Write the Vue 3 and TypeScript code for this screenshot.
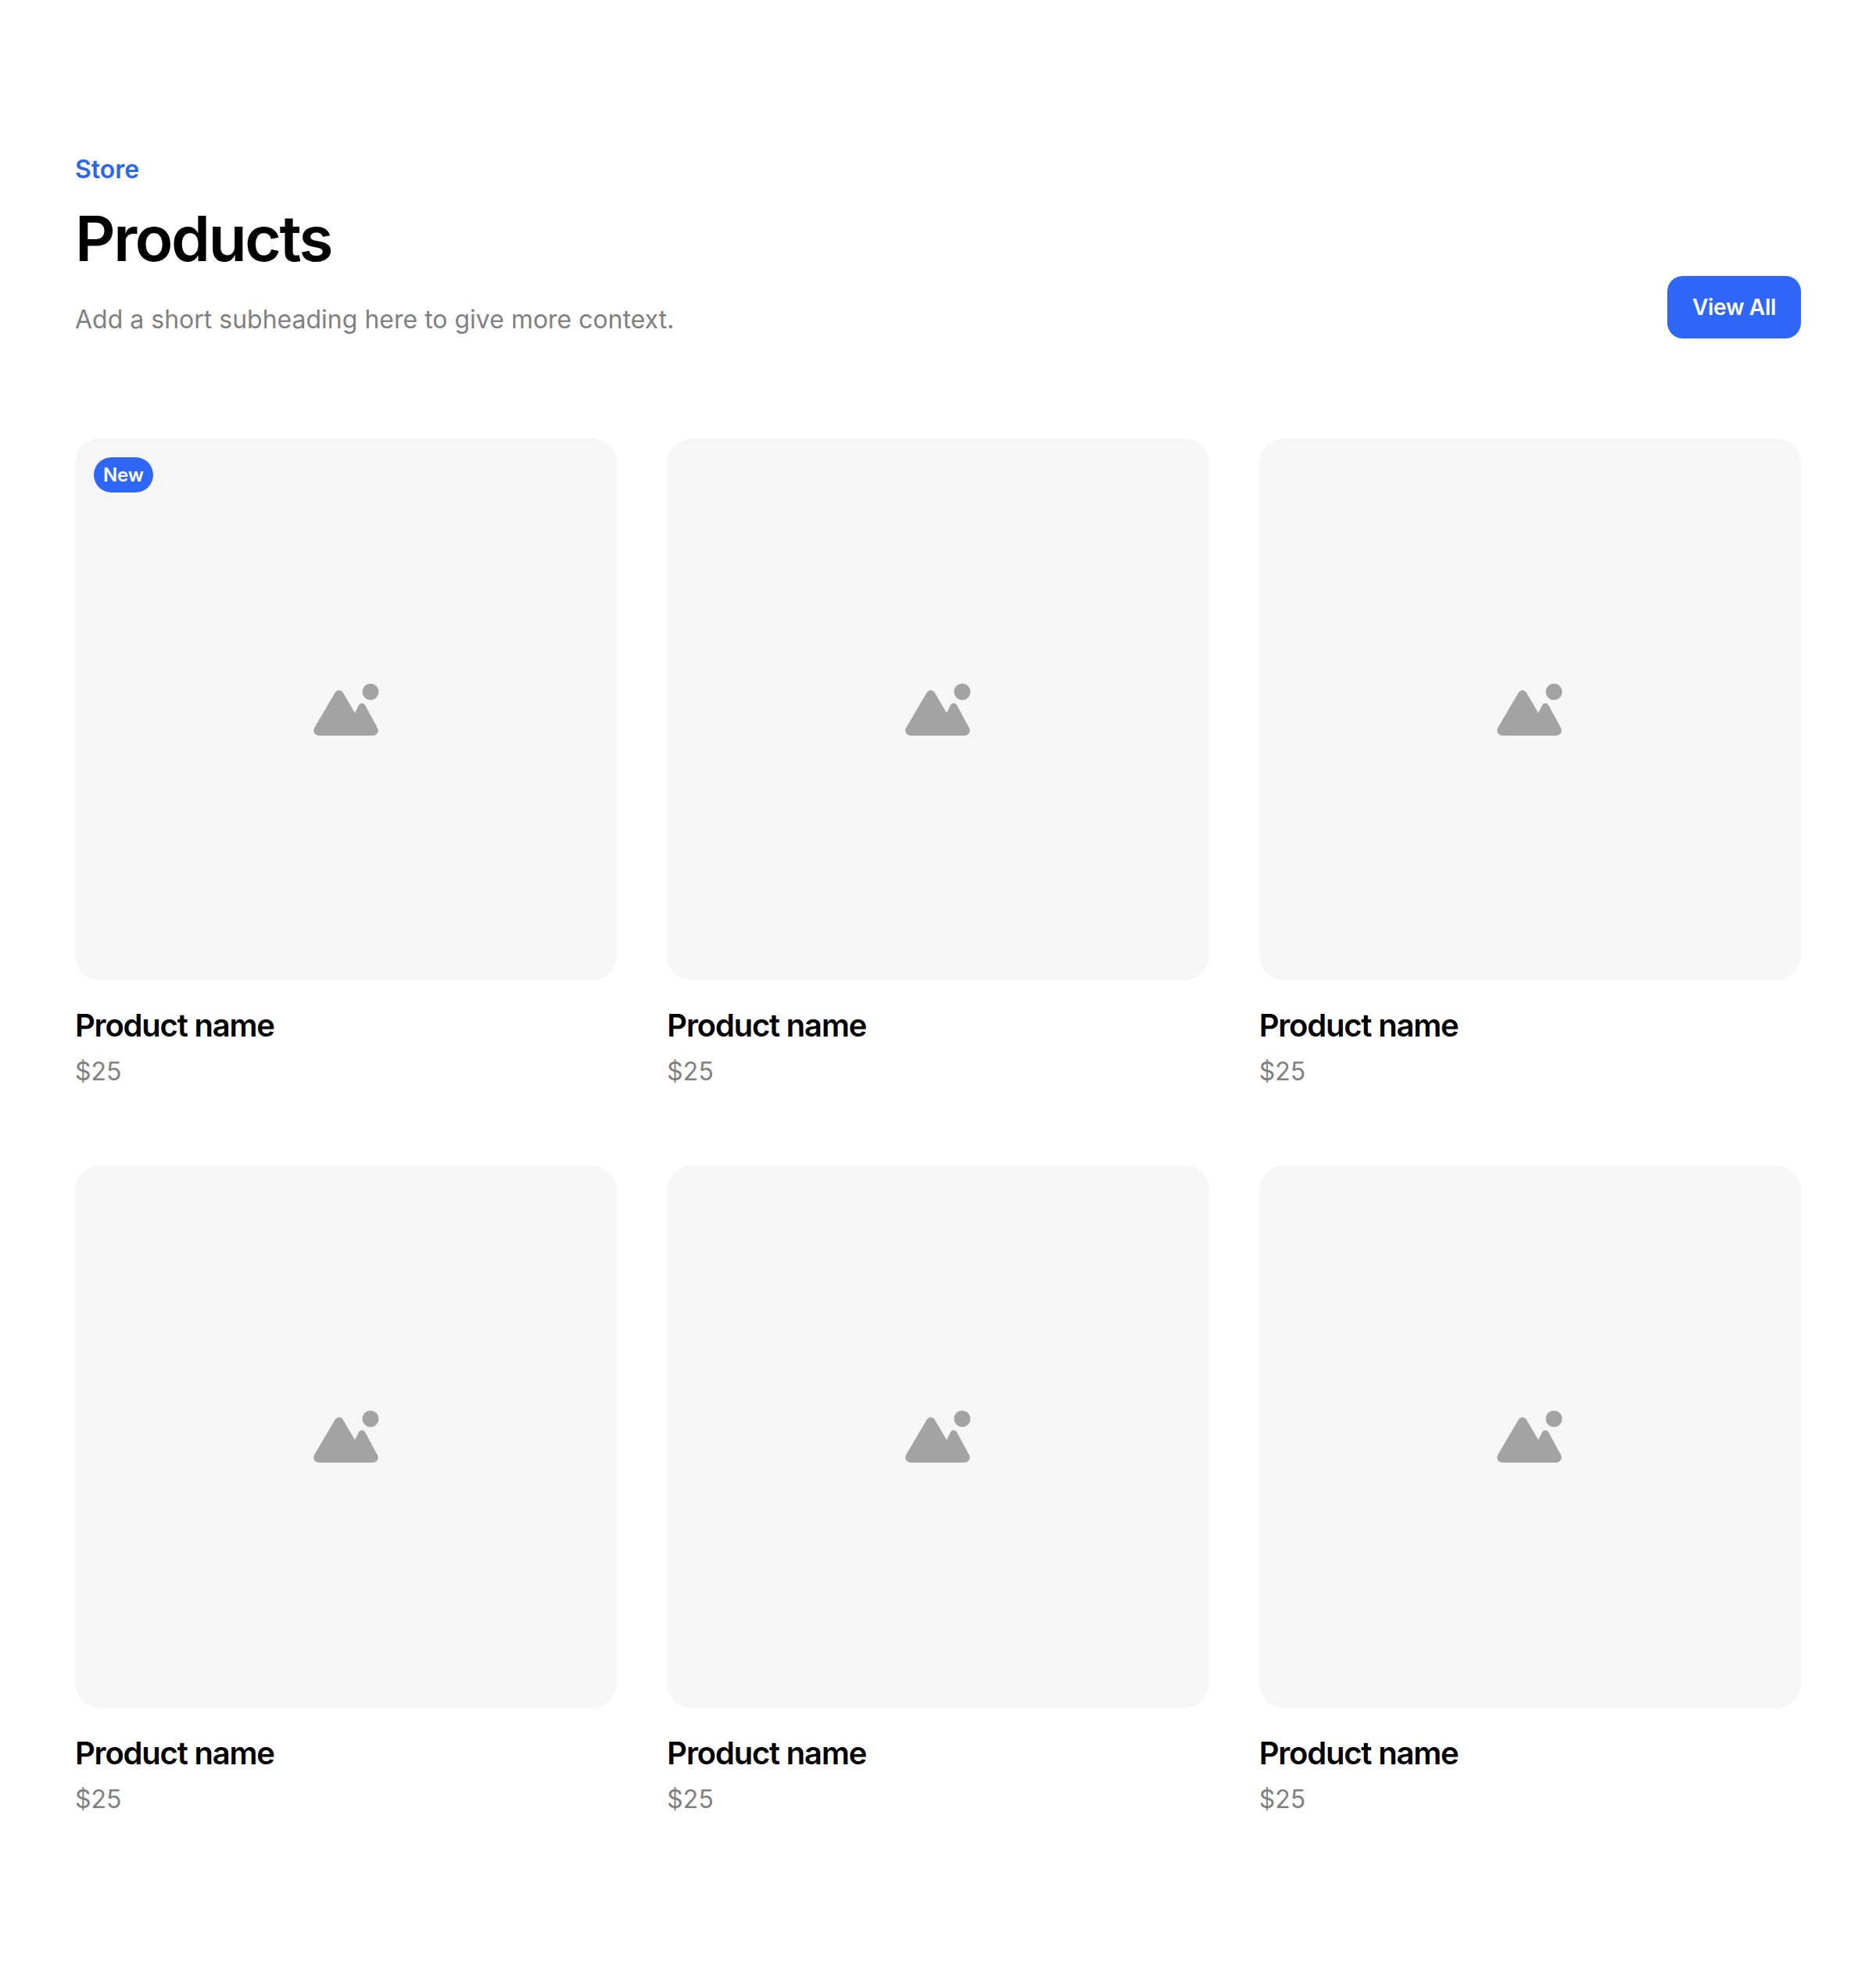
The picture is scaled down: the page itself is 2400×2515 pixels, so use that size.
<template>
  <section class="page">
    <header class="head">
      <div class="head-text">
        <div class="eyebrow">Store</div>
        <h1>Products</h1>
        <p class="sub">Add a short subheading here to give more context.</p>
      </div>
      <a class="btn" href="#">View All</a>
    </header>

    <div class="grid">
      <article v-for="item in products" :key="item.id" class="product">
        <div class="thumb">
          <span v-if="item.isNew" class="badge">New</span>
          <svg class="ph" viewBox="0 0 84 67" width="84" height="67" aria-hidden="true">
            <circle cx="73" cy="11" r="10.5" />
            <path d="M7 67C1.5 67 -1.5 61 1.5 56.5L28 11.5C30.5 8 35 8 37.5 11.5L53 38L58 28C60 24.5 64 24.5 66 28L81.5 56.5C84.5 61.5 81.5 67 76 67Z" />
          </svg>
        </div>
        <h2>{{ item.name }}</h2>
        <div class="price">{{ item.price }}</div>
      </article>
    </div>
  </section>
</template>

<script setup lang="ts">
interface Product {
  id: number;
  name: string;
  price: string;
  isNew: boolean;
}

const products: Product[] = [1, 2, 3, 4, 5, 6].map((id) => ({
  id,
  name: 'Product name',
  price: '$25',
  isNew: id === 1,
}));
</script>

<style>
body {
  background: #fff;
}
</style>

<style scoped>
.page {
  box-sizing: border-box;
  width: 2400px;
  height: 2515px;
  padding: 193px 96px 0;
  font-family: Inter, "Liberation Sans", sans-serif;
  color: #000;
}

.head {
  display: flex;
  justify-content: space-between;
  align-items: flex-end;
  margin-bottom: 128px;
}

.eyebrow {
  font-size: 32px;
  line-height: 48px;
  font-weight: 600;
  color: #2e67e6;
}

h1 {
  margin: 20px 0 36px;
  font-size: 80px;
  line-height: 88px;
  font-weight: 600;
  letter-spacing: -2.4px;
}

.sub {
  margin: 0;
  font-size: 32px;
  line-height: 48px;
  color: #808080;
}

.btn {
  display: block;
  padding: 20px 32px;
  font-size: 28px;
  line-height: 40px;
  font-weight: 600;
  letter-spacing: -0.3px;
  color: #fff;
  background: #2e67f8;
  border-radius: 20px;
  text-decoration: none;
}

.grid {
  display: grid;
  grid-template-columns: repeat(3, 1fr);
  column-gap: 64px;
  row-gap: 96px;
}

.thumb {
  position: relative;
  display: flex;
  align-items: center;
  justify-content: center;
  aspect-ratio: 1;
  background: #f6f6f6;
  border-radius: 32px;
}

.ph {
  fill: #a3a3a3;
}

.badge {
  position: absolute;
  top: 24px;
  left: 24px;
  padding: 6px 12px;
  font-size: 24px;
  line-height: 33px;
  font-weight: 600;
  letter-spacing: -0.2px;
  color: #fff;
  background: #2e67f8;
  border-radius: 999px;
}

h2 {
  margin: 30px 0 7px;
  font-size: 40px;
  line-height: 56px;
  font-weight: 600;
  letter-spacing: -1.2px;
}

.price {
  font-size: 32px;
  line-height: 48px;
  color: #808080;
}
</style>
